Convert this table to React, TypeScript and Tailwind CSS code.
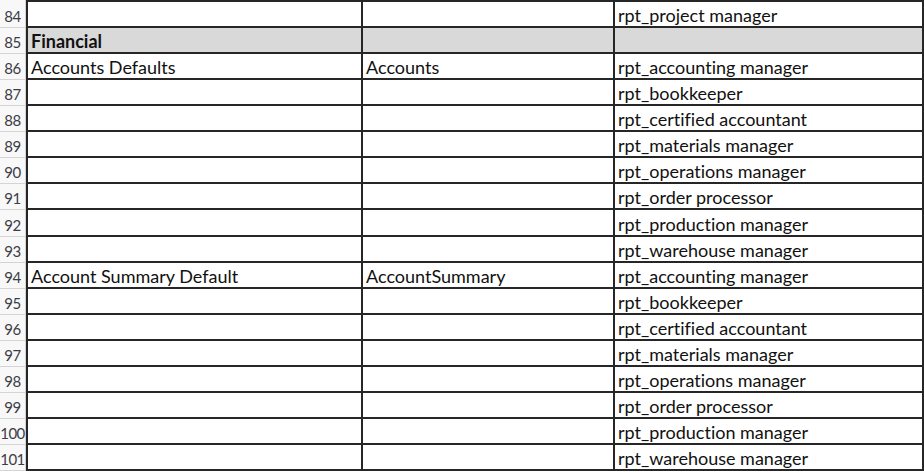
import React from "react";

type Row = {
  n: number;
  a?: string;
  b?: string;
  c?: string;
  header?: boolean;
};

const rows: Row[] = [
  { n: 84, c: "rpt_project manager" },
  { n: 85, a: "Financial", header: true },
  { n: 86, a: "Accounts Defaults", b: "Accounts", c: "rpt_accounting manager" },
  { n: 87, c: "rpt_bookkeeper" },
  { n: 88, c: "rpt_certified accountant" },
  { n: 89, c: "rpt_materials manager" },
  { n: 90, c: "rpt_operations manager" },
  { n: 91, c: "rpt_order processor" },
  { n: 92, c: "rpt_production manager" },
  { n: 93, c: "rpt_warehouse manager" },
  { n: 94, a: "Account Summary Default", b: "AccountSummary", c: "rpt_accounting manager" },
  { n: 95, c: "rpt_bookkeeper" },
  { n: 96, c: "rpt_certified accountant" },
  { n: 97, c: "rpt_materials manager" },
  { n: 98, c: "rpt_operations manager" },
  { n: 99, c: "rpt_order processor" },
  { n: 100, c: "rpt_production manager" },
  { n: 101, c: "rpt_warehouse manager" },
];

function Cell({ text, width, bold, fill }: { text?: string; width: string; bold?: boolean; fill?: boolean }) {
  return (
    <div
      className={`${width} shrink-0 border-r-2 border-b-2 border-[#262626] flex items-end px-[3px] whitespace-nowrap overflow-hidden ${
        fill ? "bg-[#d9d9d9]" : "bg-white"
      } ${bold ? "font-bold" : ""}`}
    >
      {text}
    </div>
  );
}

export default function App() {
  return (
    <div
      className="w-[924px] h-[473px] overflow-hidden bg-white text-[18px] text-[#111] leading-[22px] [font-variant-ligatures:none]"
      style={{ fontFamily: "Lato, 'Open Sans', sans-serif" }}
    >
      <div className="flex flex-col">
        {rows.map((r, i) => (
          <div key={r.n} className={`flex ${i === 0 ? "h-[28px]" : i === 8 ? "h-[27px]" : "h-[26px]"}`}>
            <div className="w-[26px] shrink-0 bg-[#f8f8f8] border-r border-b border-[#d4d4d4] flex items-end justify-center text-[#3c3c46] text-[15px] tracking-[-0.5px]">
              {r.n}
            </div>
            <div className={`flex ${i === 0 ? "border-t-2 border-[#262626]" : ""}`}>
              <div className="w-[2px] shrink-0 bg-[#262626]" />
              <Cell width="w-[335px]" text={r.a} bold={r.header} fill={r.header} />
              <Cell width="w-[252px]" text={r.b} fill={r.header} />
              <Cell width="w-[309px]" text={r.c} fill={r.header} />
            </div>
          </div>
        ))}
      </div>
    </div>
  );
}
